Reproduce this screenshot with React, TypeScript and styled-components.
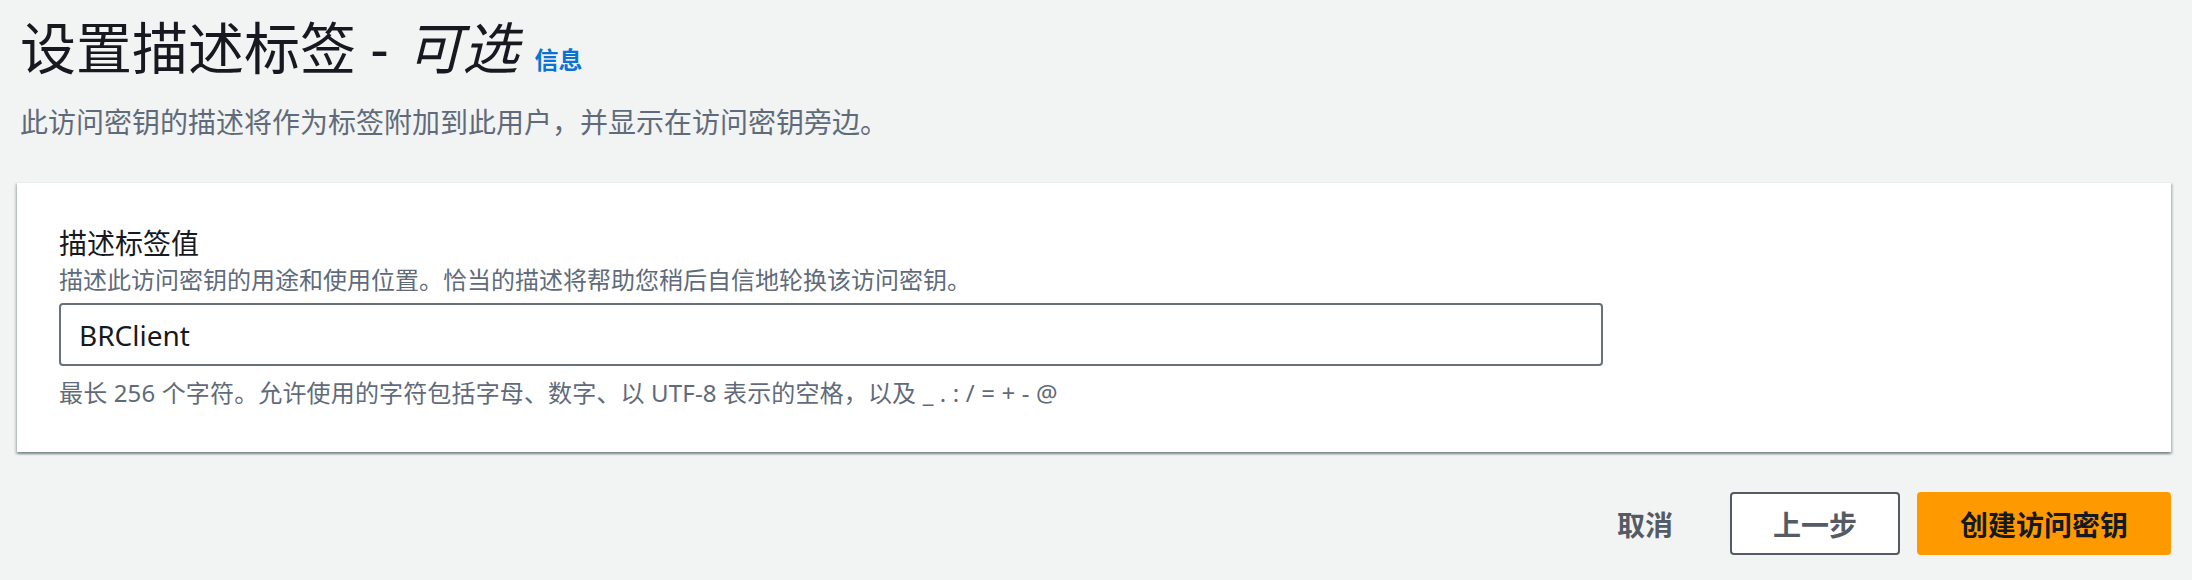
import React, { useState } from 'react'
import styled, { createGlobalStyle } from 'styled-components'

const GlobalStyle = createGlobalStyle`
	html, body {
		margin: 0;
		padding: 0;
		background: #f2f3f3;
	}
	body {
		font-family: "Noto Sans", "Noto Sans CJK SC", sans-serif;
		color: #16191f;
	}
`

const Page = styled.div`
	padding: 0 21px 0 17px;
`
const Header = styled.div`
	padding: 12px 0 0 3px;
`
const Title = styled.h1`
	margin: 0;
	font-size: 56px;
	line-height: 70px;
	font-weight: 400;
	color: #16191f;
	display: flex;
	align-items: baseline;
`
const Optional = styled.i`
	font-style: italic;
	margin-left: 18px;
`
const InfoLink = styled.a`
	font-size: 24px;
	font-weight: 700;
	color: #0972d3;
	margin-left: 16px;
	text-decoration: none;
	cursor: pointer;
`
const Subtitle = styled.p`
	margin: 7px 0 0;
	font-size: 28px;
	line-height: 40px;
	color: #5f6b7a;
`
const Card = styled.div`
	margin-top: 40px;
	background: #fff;
	border-top: 1px solid #e9ebed;
	box-shadow: 0 2px 2px 0 rgba(0, 28, 36, 0.3), 2px 2px 2px 0 rgba(0, 28, 36, 0.15), -2px 2px 2px 0 rgba(0, 28, 36, 0.15);
	padding: 40px 42px 42px;
`
const Field = styled.div`
	display: flex;
	flex-direction: column;
	width: 1544px;
`
const Label = styled.label`
	font-size: 28px;
	line-height: 40px;
	color: #16191f;
`
const Description = styled.div`
	font-size: 24px;
	line-height: 34px;
	color: #5f6b7a;
`
const Input = styled.input`
	box-sizing: border-box;
	margin-top: 6px;
	height: 63px;
	width: 100%;
	border: 2px solid #687078;
	border-radius: 4px;
	padding: 0 18px;
	font-family: "Noto Sans", "Noto Sans CJK SC", sans-serif;
	font-size: 28px;
	color: #16191f;
	outline: none;
`
const Constraint = styled.div`
	margin-top: 10px;
	font-size: 24px;
	line-height: 34px;
	letter-spacing: 0.15px;
	color: #5f6b7a;
`
const Footer = styled.div`
	margin-top: 40px;
	display: flex;
	justify-content: flex-end;
	gap: 17px;
`
const Button = styled.button<{ $variant: 'link' | 'normal' | 'primary' }>`
	box-sizing: border-box;
	height: 63px;
	padding: 0 ${p => (p.$variant === 'link' ? '38px' : '41px')};
	border-radius: 4px;
	font-family: "Noto Sans", "Noto Sans CJK SC", sans-serif;
	font-size: 28px;
	font-weight: 700;
	cursor: pointer;
	border: 2px solid ${p => (p.$variant === 'normal' ? '#545b64' : p.$variant === 'primary' ? '#ff9900' : 'transparent')};
	background: ${p => (p.$variant === 'normal' ? '#fff' : p.$variant === 'primary' ? '#ff9900' : 'transparent')};
	color: ${p => (p.$variant === 'primary' ? '#16191f' : '#545b64')};
`

export default function App() {
	const [value, setValue] = useState('BRClient')
	return (
		<Page>
			<GlobalStyle />
			<Header>
				<Title>
					设置描述标签 -<Optional>可选</Optional>
					<InfoLink>信息</InfoLink>
				</Title>
				<Subtitle>此访问密钥的描述将作为标签附加到此用户，并显示在访问密钥旁边。</Subtitle>
			</Header>
			<Card>
				<Field>
					<Label>描述标签值</Label>
					<Description>描述此访问密钥的用途和使用位置。恰当的描述将帮助您稍后自信地轮换该访问密钥。</Description>
					<Input value={value} onChange={e => setValue(e.target.value)} />
					<Constraint>最长 256 个字符。允许使用的字符包括字母、数字、以 UTF-8 表示的空格，以及 _ . : / = + - @</Constraint>
				</Field>
			</Card>
			<Footer>
				<Button $variant="link">取消</Button>
				<Button $variant="normal">上一步</Button>
				<Button $variant="primary">创建访问密钥</Button>
			</Footer>
		</Page>
	)
}
